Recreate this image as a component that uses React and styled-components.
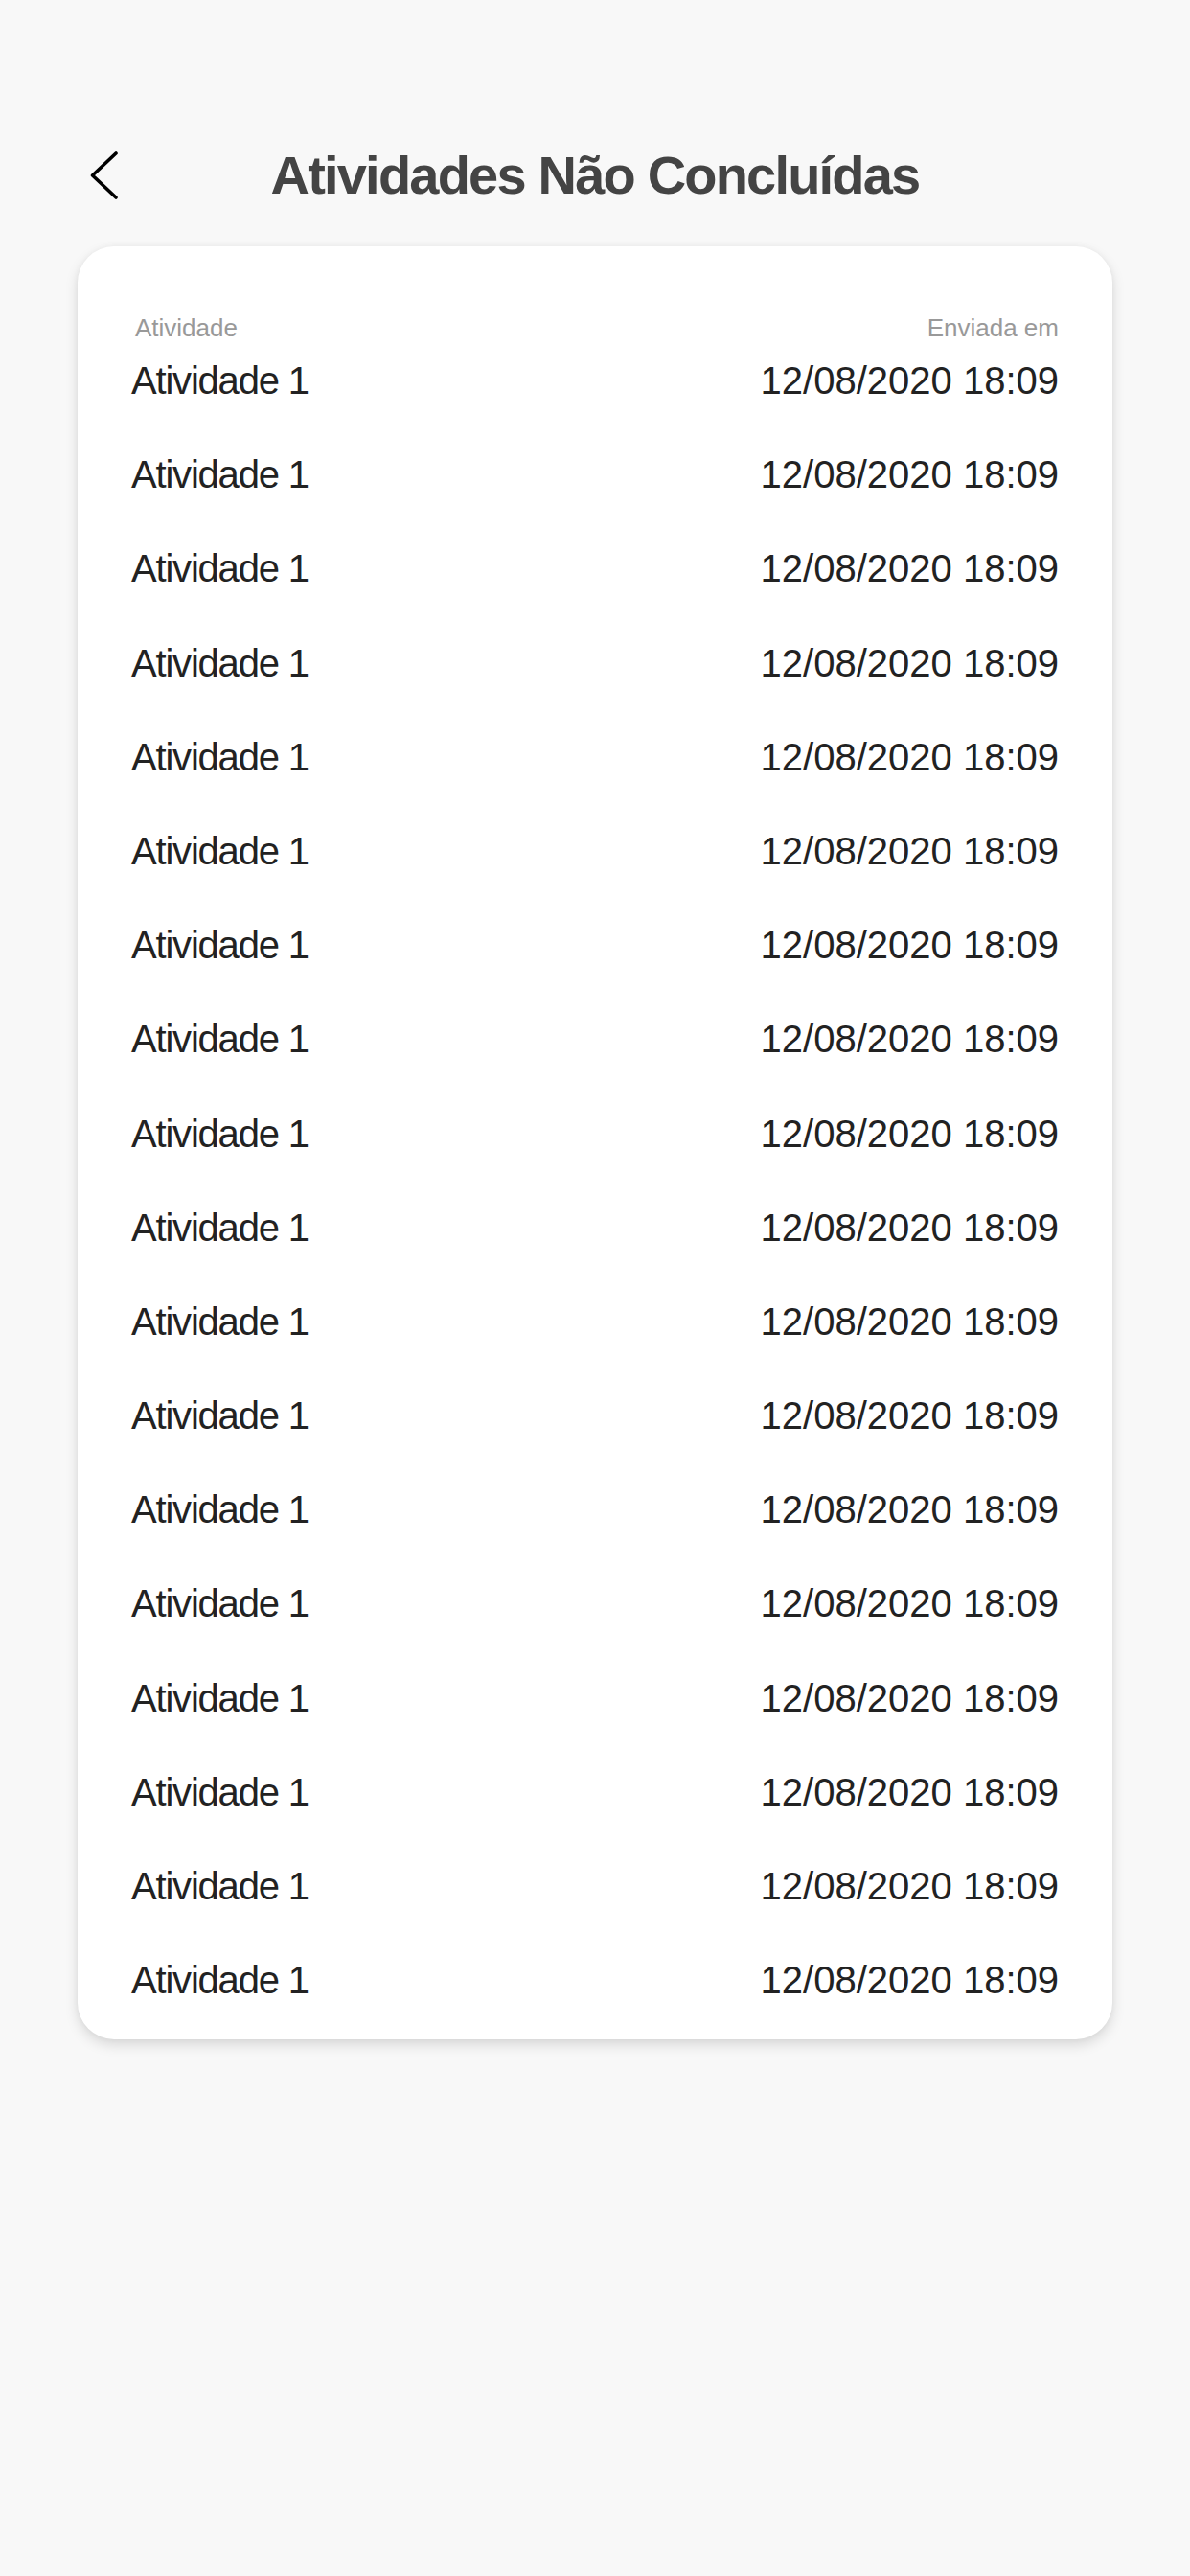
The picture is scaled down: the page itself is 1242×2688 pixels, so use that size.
import React from 'react';
import styled, { createGlobalStyle } from 'styled-components';

const GlobalStyle = createGlobalStyle`
  html, body {
    margin: 0;
    padding: 0;
    background-color: #f8f8f8;
    font-family: 'Liberation Sans', Arial, sans-serif;
  }
`;

const Page = styled.div`
  min-height: 2688px;
  width: 1242px;
  padding-top: 151px;
  box-sizing: border-box;
  background-color: #f8f8f8;
`;

const Header = styled.div`
  display: grid;
  grid-template-columns: 1fr auto 1fr;
  align-items: center;
  height: 64px;
  margin-bottom: 42px;

  .back {
    padding-left: 94px;
    display: flex;
    align-items: center;
  }
`;

const Title = styled.h1`
  margin: 0;
  font-size: 56px;
  line-height: 64px;
  font-weight: 700;
  letter-spacing: -1.8px;
  color: #444444;
  white-space: nowrap;
`;

const Card = styled.div`
  margin: 0 81px;
  padding: 70px 56px 38px;
  background-color: #ffffff;
  border-radius: 38px;
  box-shadow: 0 6px 14px rgba(0, 0, 0, 0.13), 0 0 6px rgba(0, 0, 0, 0.04);
`;

const Labels = styled.div`
  display: flex;
  justify-content: space-between;
  font-size: 26px;
  line-height: 30px;
  color: #999999;
  margin-bottom: 16px;
  padding-left: 4px;
`;

const List = styled.div`
  display: flex;
  flex-direction: column;
  gap: 50.2px;
`;

const Row = styled.div`
  display: flex;
  justify-content: space-between;
  font-size: 40px;
  line-height: 48px;
  color: #222222;

  .name {
    letter-spacing: -1.2px;
  }
`;

const rows = Array.from({ length: 18 }, () => ({
  name: 'Atividade 1',
  sent: '12/08/2020 18:09',
}));

const BackIcon = () => (
  <svg width="30" height="52" viewBox="0 0 30 52" fill="none">
    <path
      d="M27 3 L2.5 26 L27 49"
      stroke="#000000"
      strokeWidth="3.6"
      strokeLinecap="round"
      strokeLinejoin="round"
    />
  </svg>
);

const App = () => (
  <>
    <GlobalStyle />
    <Page>
      <Header>
        <div className="back">
          <BackIcon />
        </div>
        <Title>Atividades Não Concluídas</Title>
        <div />
      </Header>
      <Card>
        <Labels>
          <span>Atividade</span>
          <span>Enviada em</span>
        </Labels>
        <List>
          {rows.map((row, i) => (
            <Row key={i}>
              <span className="name">{row.name}</span>
              <span>{row.sent}</span>
            </Row>
          ))}
        </List>
      </Card>
    </Page>
  </>
);

export default App;
